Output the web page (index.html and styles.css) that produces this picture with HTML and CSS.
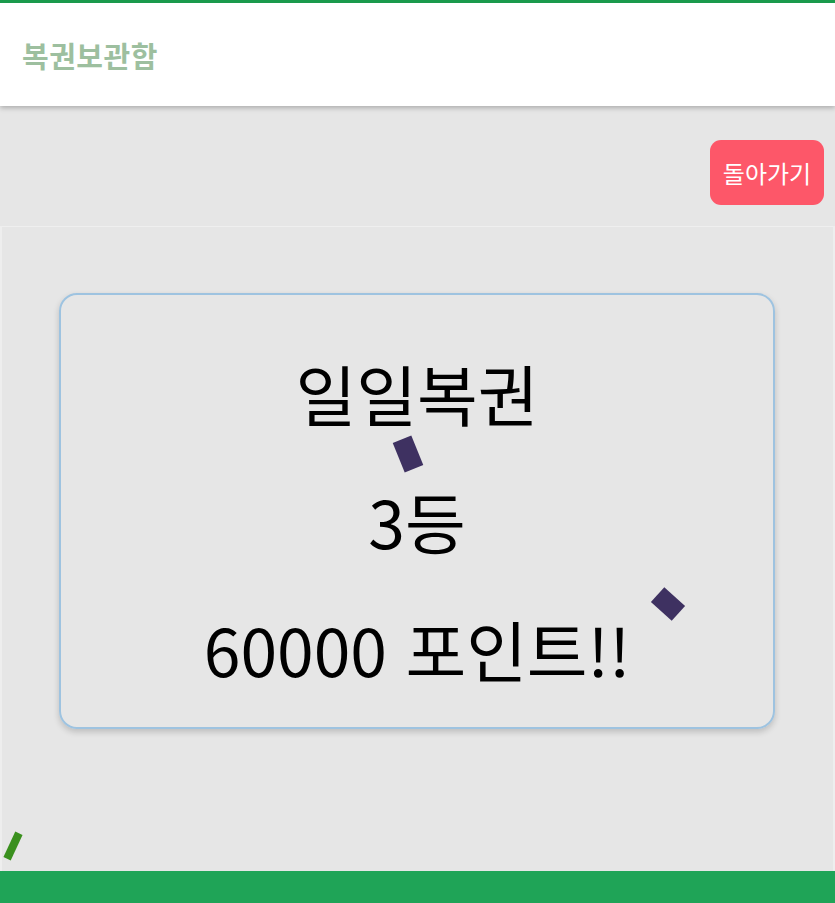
FILE: index.html
```html
<!DOCTYPE html>
<html lang="ko">
<head>
    <meta charset="utf-8" />
    <title>복권보관함</title>
    <link rel="stylesheet" href="styles.css">
</head>
<body>
    <div class="header">
        <h2 class="title">복권보관함</h2>
    </div>

    <div class="toolbar">
        <button class="backBtn">돌아가기</button>
    </div>

    <div class="content">
        <div class="resultCard">
            <p class="line">일일복권</p>
            <p class="line">3등</p>
            <p class="line">60000 포인트!!</p>
        </div>

        <span class="confetti c1"></span>
        <span class="confetti c2"></span>
        <span class="confetti c3"></span>
    </div>

    <div class="footer"></div>
</body>
</html>
```

FILE: styles.css
```css
html, body {
    margin: 0;
    padding: 0;
    height: 100%;
}

body {
    font-family: "Noto Sans CJK KR", "Noto Sans", sans-serif;
    background: #e6e6e6;
    display: flex;
    flex-direction: column;
}

.header {
    background: #ffffff;
    border-top: 3px solid #1a9a4c;
    height: 103px;
    display: flex;
    align-items: center;
    padding-left: 22px;
    box-shadow: 0 2px 5px rgba(0, 0, 0, 0.25);
    position: relative;
    z-index: 2;
}

.title {
    margin: 0;
    font-size: 29px;
    font-weight: 700;
    color: #9dbf9f;
    letter-spacing: 0.5px;
}

.toolbar {
    height: 120px;
    display: flex;
    justify-content: flex-end;
    align-items: center;
    padding-right: 11px;
}

.backBtn {
    width: 114px;
    height: 65px;
    border: none;
    border-radius: 11px;
    background: #fd5769;
    color: #ffffff;
    font-family: "Noto Sans CJK KR", sans-serif;
    font-size: 24px;
    padding: 0;
    margin-top: 13px;
}

.content {
    flex: 1;
    position: relative;
    border-top: 1px solid #efefef;
    border-left: 2px solid #eeeeee;
    border-right: 2px solid #eeeeee;
    padding-top: 66px;
}

.resultCard {
    margin: 0 58px 0 57px;
    height: 414px;
    padding-top: 18px;
    border: 2px solid #9ec3e0;
    border-radius: 18px;
    box-shadow: 0 3px 6px rgba(0, 0, 0, 0.18);
    display: flex;
    flex-direction: column;
    align-items: center;
    justify-content: center;
    gap: 40px;
}

.line {
    margin: 0;
    font-size: 66px;
    line-height: 88px;
    color: #000000;
}

.confetti {
    position: absolute;
    display: block;
}

.c1 {
    left: 396px;
    top: 211px;
    width: 20px;
    height: 32px;
    background: #3e3161;
    transform: rotate(-22deg);
}

.c2 {
    left: 652px;
    top: 367px;
    width: 28px;
    height: 20px;
    background: #3e3161;
    transform: rotate(42deg);
}

.c3 {
    left: 7px;
    top: 605px;
    width: 8px;
    height: 28px;
    background: #3a901e;
    transform: rotate(25deg);
}

.footer {
    height: 32px;
    background: #1fa457;
}
```
